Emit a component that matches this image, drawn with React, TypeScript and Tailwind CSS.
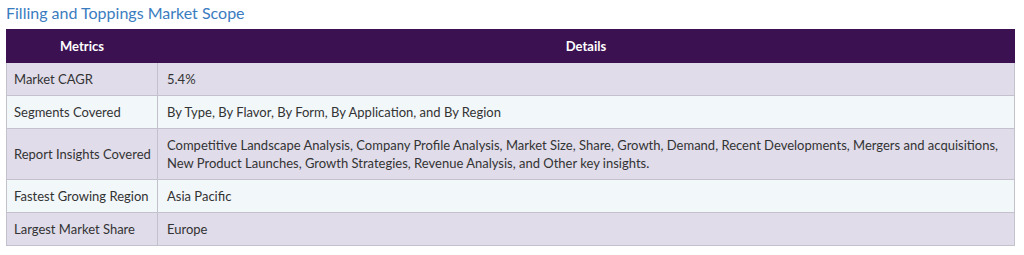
import React from 'react';

const ROWS = [
  { metric: 'Market CAGR', details: '5.4%' },
  { metric: 'Segments Covered', details: 'By Type, By Flavor, By Form, By Application, and By Region' },
  {
    metric: 'Report Insights Covered',
    details:
      'Competitive Landscape Analysis, Company Profile Analysis, Market Size, Share, Growth, Demand, Recent Developments, Mergers and acquisitions, New Product Launches, Growth Strategies, Revenue Analysis, and Other key insights.',
  },
  { metric: 'Fastest Growing Region', details: 'Asia Pacific' },
  { metric: 'Largest Market Share', details: 'Europe' },
];

export default function App() {
  return (
    <div className="w-[1024px] h-[255px] bg-white pl-[6px] pt-[3px]" style={{ fontFamily: 'Lato, "Open Sans", sans-serif' }}>
      {/* Title */}
      <h2 className="text-[16px] leading-[20px] text-[#3a7cc0] mb-[6px]">Filling and Toppings Market Scope</h2>

      {/* Scope table */}
      <table className="w-[1009px] table-fixed border-collapse text-[13px] leading-[18px] text-[#333]">
        <colgroup>
          <col className="w-[151px]" />
          <col />
        </colgroup>
        <thead>
          <tr className="bg-[#3b1152] text-white">
            <th className="h-[33px] border border-[#3b1152] font-bold text-center">Metrics</th>
            <th className="h-[33px] border border-[#3b1152] border-l-[#b9b4c6] font-bold text-center">Details</th>
          </tr>
        </thead>
        <tbody>
          {ROWS.map((row, i) => (
            <tr key={row.metric} className={i % 2 === 0 ? 'bg-[#e0dcea]' : 'bg-[#f2f7fa]'}>
              <td className="border border-[#c3c1cc] pl-[7px] pr-[2px] py-[7px] align-middle whitespace-nowrap">{row.metric}</td>
              <td className="border border-[#c3c1cc] pl-[9px] pr-[4px] py-[7px] align-middle">{row.details}</td>
            </tr>
          ))}
        </tbody>
      </table>
    </div>
  );
}
